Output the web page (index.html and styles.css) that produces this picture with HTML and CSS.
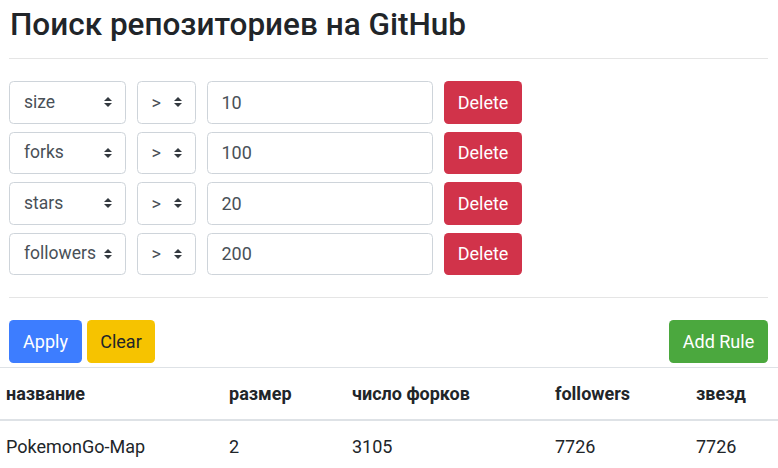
FILE: index.html
```html
<!DOCTYPE html>
<html lang="ru">
<head>
<meta charset="utf-8">
<title>Поиск репозиториев на GitHub</title>
<link rel="stylesheet" href="styles.css">
</head>
<body>
<div class="page">
  <h1 class="title">Поиск репозиториев на GitHub</h1>
  <hr class="divider top">
  <div class="rules">
    <div class="rule">
      <div class="select field-select"><span>size</span><svg class="caret" viewBox="0 0 4 5" width="8" height="10"><path d="M2 0L0 2h4zm0 5L0 3h4z" fill="#343a40"/></svg></div>
      <div class="select op-select"><span>&gt;</span><svg class="caret" viewBox="0 0 4 5" width="8" height="10"><path d="M2 0L0 2h4zm0 5L0 3h4z" fill="#343a40"/></svg></div>
      <div class="input">10</div>
      <button class="btn btn-danger">Delete</button>
    </div>
    <div class="rule">
      <div class="select field-select"><span>forks</span><svg class="caret" viewBox="0 0 4 5" width="8" height="10"><path d="M2 0L0 2h4zm0 5L0 3h4z" fill="#343a40"/></svg></div>
      <div class="select op-select"><span>&gt;</span><svg class="caret" viewBox="0 0 4 5" width="8" height="10"><path d="M2 0L0 2h4zm0 5L0 3h4z" fill="#343a40"/></svg></div>
      <div class="input">100</div>
      <button class="btn btn-danger">Delete</button>
    </div>
    <div class="rule">
      <div class="select field-select"><span>stars</span><svg class="caret" viewBox="0 0 4 5" width="8" height="10"><path d="M2 0L0 2h4zm0 5L0 3h4z" fill="#343a40"/></svg></div>
      <div class="select op-select"><span>&gt;</span><svg class="caret" viewBox="0 0 4 5" width="8" height="10"><path d="M2 0L0 2h4zm0 5L0 3h4z" fill="#343a40"/></svg></div>
      <div class="input">20</div>
      <button class="btn btn-danger">Delete</button>
    </div>
    <div class="rule">
      <div class="select field-select"><span>followers</span><svg class="caret" viewBox="0 0 4 5" width="8" height="10"><path d="M2 0L0 2h4zm0 5L0 3h4z" fill="#343a40"/></svg></div>
      <div class="select op-select"><span>&gt;</span><svg class="caret" viewBox="0 0 4 5" width="8" height="10"><path d="M2 0L0 2h4zm0 5L0 3h4z" fill="#343a40"/></svg></div>
      <div class="input">200</div>
      <button class="btn btn-danger">Delete</button>
    </div>
  </div>
  <hr class="divider bottom">
  <div class="actions">
    <button class="btn btn-primary">Apply</button>
    <button class="btn btn-warning">Clear</button>
    <button class="btn btn-success push">Add Rule</button>
  </div>
</div>
<table class="results">
  <colgroup>
    <col class="c1"><col class="c2"><col class="c3"><col class="c4"><col class="c5">
  </colgroup>
  <thead>
    <tr><th>название</th><th>размер</th><th>число форков</th><th>followers</th><th>звезд</th></tr>
  </thead>
  <tbody>
    <tr><td>PokemonGo-Map</td><td>2</td><td>3105</td><td>7726</td><td>7726</td></tr>
  </tbody>
</table>
</body>
</html>
```

FILE: styles.css
```css
html, body {
  margin: 0;
  padding: 0;
  background: #fff;
}
body {
  font-family: Roboto, "Noto Sans", "Liberation Sans", sans-serif;
  font-size: 18px;
  line-height: 27px;
  color: #212529;
}
.page {
  padding: 0 10px 0 9px;
}
.title {
  margin: 6px 0 0 1px;
  font-size: 31.5px;
  line-height: 38px;
  font-weight: 500;
}
.divider {
  border: 0;
  border-top: 1px solid rgba(0,0,0,0.1);
  margin: 0;
}
.divider.top {
  margin-top: 14px;
  margin-bottom: 22px;
}
.divider.bottom {
  margin-top: 22px;
  margin-bottom: 22px;
}
.rules {
  display: flex;
  flex-direction: column;
  gap: 8px;
}
.rule {
  display: flex;
  gap: 11px;
  align-items: center;
}
.select, .input {
  box-sizing: border-box;
  height: 42.5px;
  border: 1px solid #ced4da;
  border-radius: 4.5px;
  background: #fff;
  color: #495057;
  display: flex;
  align-items: center;
  padding: 0 13.5px;
}
.select {
  justify-content: space-between;
}
.field-select {
  width: 117px;
  padding-left: 14px;
}
.field-select span {
  font-size: 17.5px;
}
.op-select {
  width: 59px;
}
.input {
  width: 226px;
}
.btn {
  box-sizing: border-box;
  height: 42.5px;
  border: 1px solid transparent;
  border-radius: 4.5px;
  padding: 0 13.5px;
  font-family: inherit;
  font-size: 18px;
  line-height: 27px;
  cursor: pointer;
}
.btn-danger {
  background: #d1334a;
  color: #fff;
  width: 78px;
  padding: 0;
}
.btn-primary {
  background: #3d7dff;
  color: #fff;
  width: 73px;
  padding: 0;
}
.btn-warning {
  background: #f6c300;
  color: #212529;
  width: 68px;
  padding: 0;
}
.btn-success {
  background: #4ba83e;
  color: #fff;
  width: 99px;
  padding: 0;
}
.actions {
  display: flex;
  gap: 5px;
}
.push {
  margin-left: auto;
}
.results {
  width: 100%;
  margin-top: 4px;
  border-collapse: collapse;
  table-layout: fixed;
}
.c1 { width: 223px; }
.c2 { width: 123px; }
.c3 { width: 203px; }
.c4 { width: 141px; }
.c5 { width: auto; }
.results th, .results td {
  text-align: left;
  padding: 12px 6px;
  border-top: 1px solid #dee2e6;
  vertical-align: top;
}
.results th {
  font-weight: 700;
  border-bottom: 2px solid #dee2e6;
}
```
